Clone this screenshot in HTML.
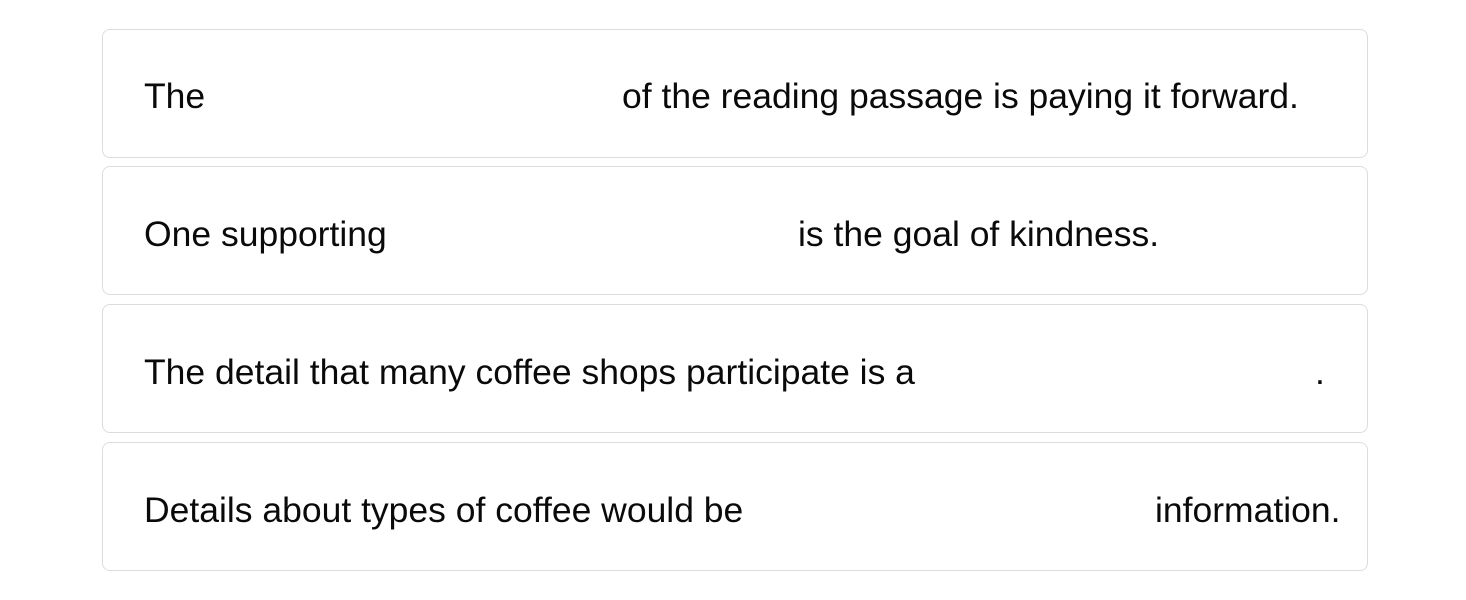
<!DOCTYPE html>
<html><head><style>
body{margin:0;background:#fff;width:1466px;height:600px;position:relative;font-family:"Liberation Sans",Arial,sans-serif;color:#0a0a0a;}
.c{position:absolute;left:102px;width:1266px;height:129px;border:1px solid #dcdcdc;border-radius:8px;box-sizing:border-box;}
.t{position:absolute;font-size:35.5px;line-height:1;white-space:nowrap;}
</style></head><body>
<div class="c" style="top:29px"></div>
<div class="c" style="top:166px"></div>
<div class="c" style="top:304px"></div>
<div class="c" style="top:442px"></div>
<span class="t" style="left:144px;top:79px">The</span>
<span class="t" style="left:622px;top:79px">of the reading passage is paying it forward.</span>
<span class="t" style="left:144px;top:217px">One supporting</span>
<span class="t" style="left:798px;top:217px">is the goal of kindness.</span>
<span class="t" style="left:144px;top:355px">The detail that many coffee shops participate is a</span>
<span class="t" style="left:1315px;top:355px">.</span>
<span class="t" style="left:144px;top:493px">Details about types of coffee would be</span>
<span class="t" style="left:1155px;top:493px">information.</span>
</body></html>
